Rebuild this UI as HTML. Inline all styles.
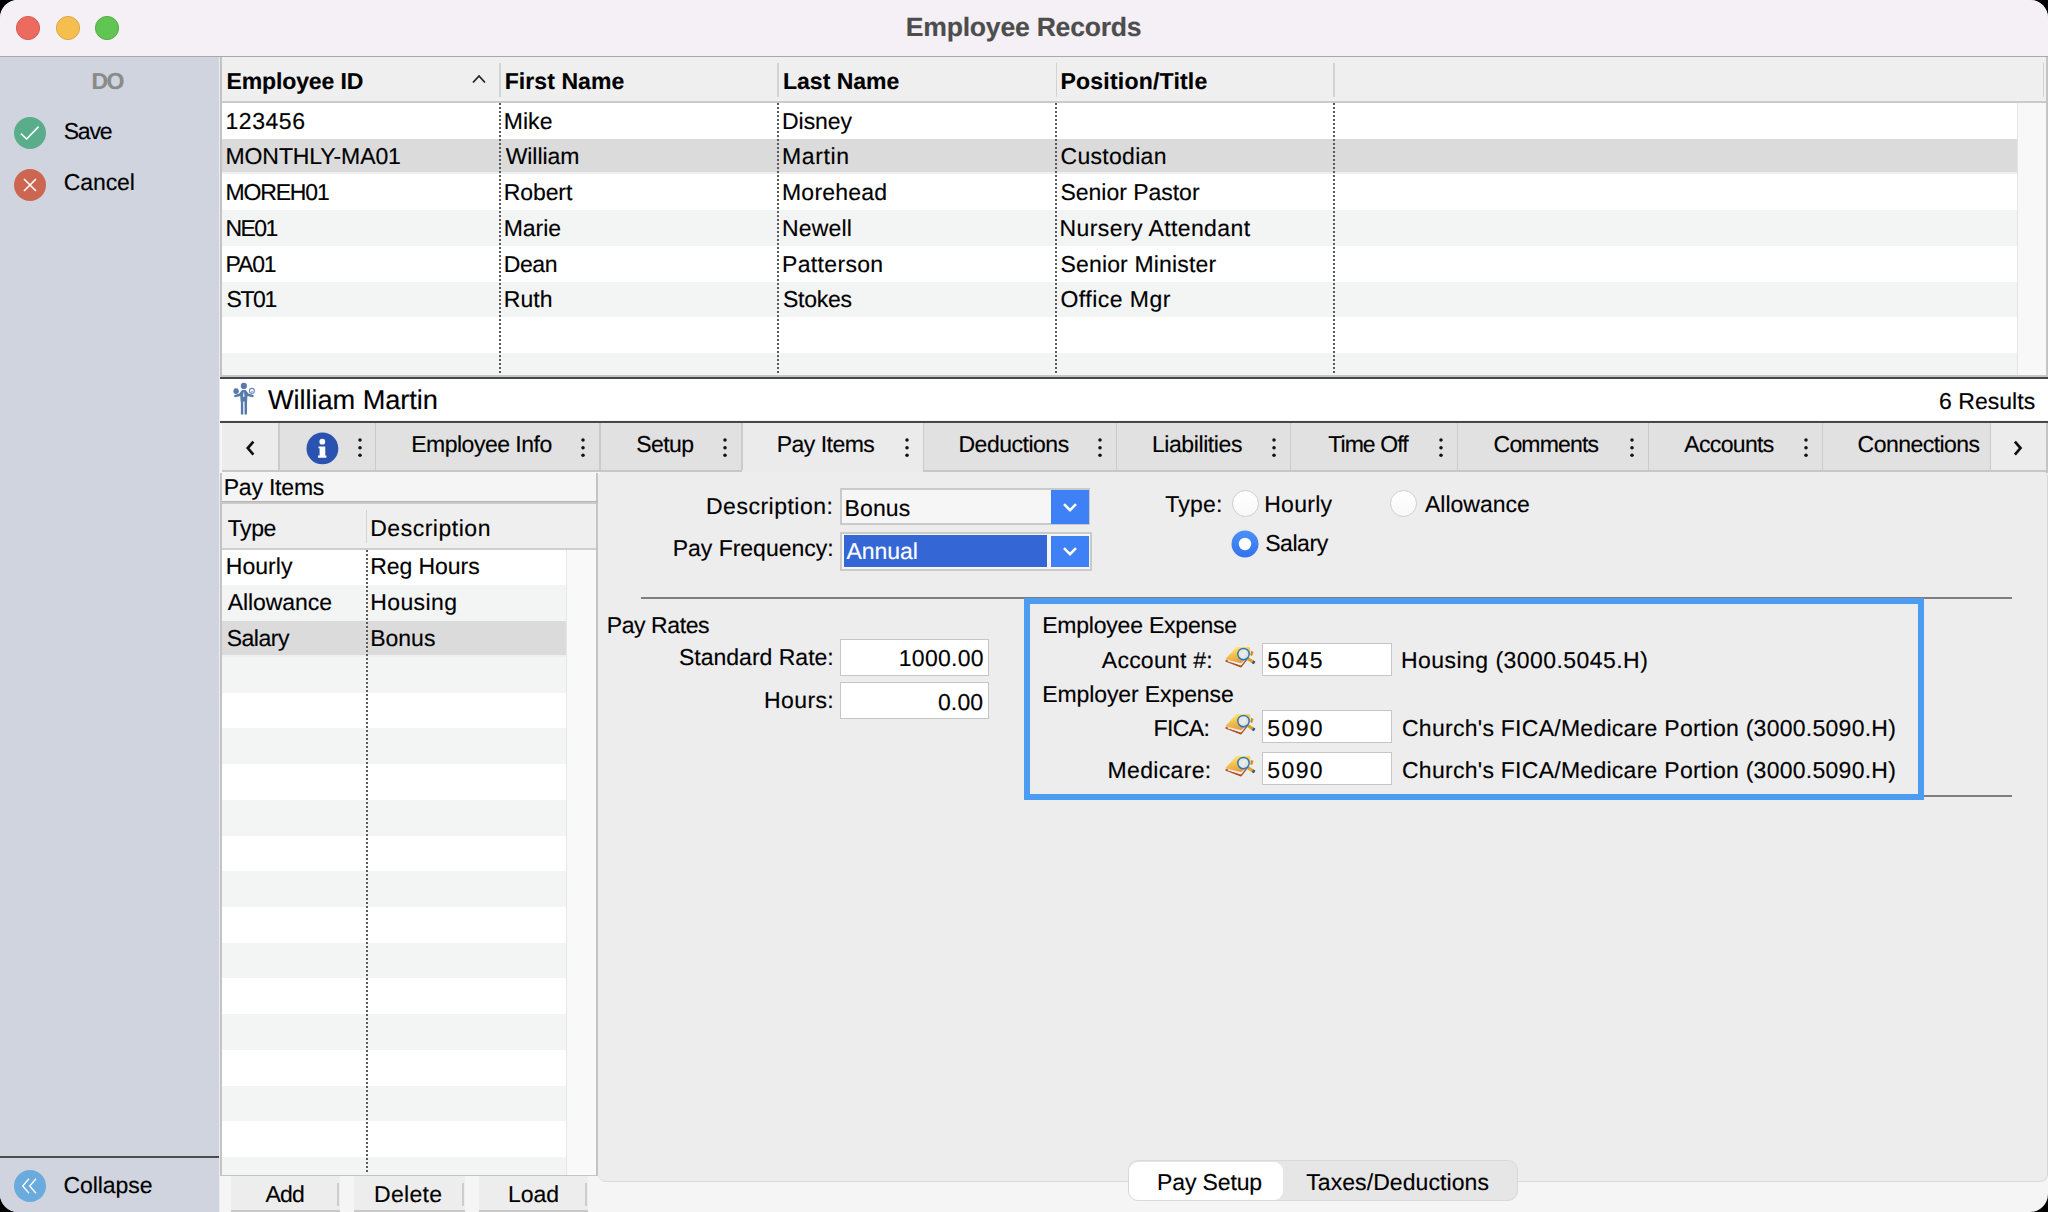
<!DOCTYPE html>
<html><head><meta charset="utf-8"><style>
html,body{margin:0;padding:0;background:#000;width:2048px;height:1212px;overflow:hidden}
#win{position:absolute;left:0;top:0;width:2048px;height:1212px;border-radius:18px;overflow:hidden;background:#f5f5f5}
.a{position:absolute}
.t{position:absolute;white-space:pre;font-family:"Liberation Sans", sans-serif;text-rendering:geometricPrecision;-webkit-text-stroke:0.15px currentColor;}
</style></head><body><div id="win">
<div class=a style='left:0px;top:0px;width:2048.00px;height:56.00px;background:#f4f0f6;'></div>
<div class=a style='left:0px;top:56px;width:2048.00px;height:1.00px;background:#a9a9ab;'></div>
<svg class=a style='left:15px;top:15px' width=26 height=26><circle cx=13 cy=13 r=11.6 fill='#ed6a5e' stroke='#d4574c' stroke-width=0.9 /></svg>
<svg class=a style='left:54.5px;top:15px' width=26 height=26><circle cx=13 cy=13 r=11.6 fill='#f5bf4f' stroke='#d8a13f' stroke-width=0.9 /></svg>
<svg class=a style='left:94px;top:15px' width=26 height=26><circle cx=13 cy=13 r=11.6 fill='#61c554' stroke='#4fa73f' stroke-width=0.9 /></svg>
<div class=a style='left:0px;top:57px;width:219.00px;height:1155.00px;background:#cfd4de;'></div>
<div class=a style='left:219px;top:57px;width:1.00px;height:1155.00px;background:#e9eaee;'></div>
<div class=a style='left:0px;top:1156px;width:219.00px;height:2.00px;background:#4b4b4b;'></div>
<svg class=a style='left:14px;top:117px' width=32 height=32><circle cx=16 cy=16 r=16 fill='#5aad8a' /><path d='M6.8 16.6 L12.6 22 L24.6 9.6' fill=none stroke='#fff' stroke-width=1.6 /></svg>
<svg class=a style='left:14px;top:168.5px' width=32 height=32><circle cx=16 cy=16 r=16 fill='#cc6651' /><path d='M10 10 L22 22 M22 10 L10 22' fill=none stroke='#fff' stroke-width=1.6 /></svg>
<svg class=a style='left:14px;top:1170px' width=32 height=32><circle cx=16 cy=16 r=16 fill='#6aabdd' /><path d='M15 8.8 L8.7 16 L15 23.2 M22 8.8 L15.7 16 L22 23.2' fill=none stroke='#fff' stroke-width=1.3 /></svg>
<div class=a style='left:220px;top:57px;width:1828.00px;height:320.00px;background:#ffffff;'></div>
<div class=a style='left:220px;top:57px;width:2.00px;height:320.00px;background:#c3c3c3;'></div>
<div class=a style='left:2046px;top:57px;width:2.00px;height:320.00px;background:#c4c4c4;'></div>
<div class=a style='left:222px;top:57px;width:1824.00px;height:44.00px;background:#efefef;'></div>
<div class=a style='left:222px;top:101px;width:1824.00px;height:1.50px;background:#cbcbcb;'></div>
<div class=a style='left:499px;top:63px;width:1.50px;height:34.00px;background:#d3d3d3;'></div>
<div class=a style='left:777px;top:63px;width:1.50px;height:34.00px;background:#d3d3d3;'></div>
<div class=a style='left:1055.5px;top:63px;width:1.50px;height:34.00px;background:#d3d3d3;'></div>
<div class=a style='left:1333px;top:63px;width:1.50px;height:34.00px;background:#d3d3d3;'></div>
<div class=a style='left:2042.5px;top:63px;width:1.50px;height:34.00px;background:#d3d3d3;'></div>
<svg class=a style='left:470px;top:72px' width=18 height=14><path d='M3 10.5 L9 4 L15 10.5' fill=none stroke='#222' stroke-width=1.8 /></svg>
<div class=a style='left:222px;top:102.87px;width:1794.50px;height:35.73px;background:#ffffff;'></div>
<div class=a style='left:222px;top:138.6px;width:1794.50px;height:33.73px;background:#dbdbdb;'></div>
<div class=a style='left:222px;top:172.32999999999998px;width:1794.50px;height:2.00px;background:#efefef;'></div>
<div class=a style='left:222px;top:174.32999999999998px;width:1794.50px;height:35.73px;background:#ffffff;'></div>
<div class=a style='left:222px;top:210.05999999999997px;width:1794.50px;height:35.73px;background:#f3f4f4;'></div>
<div class=a style='left:222px;top:245.78999999999996px;width:1794.50px;height:35.73px;background:#ffffff;'></div>
<div class=a style='left:222px;top:281.52px;width:1794.50px;height:35.73px;background:#f3f4f4;'></div>
<div class=a style='left:222px;top:317.25px;width:1794.50px;height:35.73px;background:#ffffff;'></div>
<div class=a style='left:222px;top:352.98px;width:1794.50px;height:23.52px;background:#f3f4f4;'></div>
<div class=a style='left:2016.5px;top:102.5px;width:29.50px;height:274.00px;background:#f8f8f8;'></div>
<div class=a style='left:2016.5px;top:102.5px;width:1.00px;height:274.00px;background:#e4e4e4;'></div>
<div class=a style='left:498.7px;top:103px;width:2.00px;height:273.50px;background:repeating-linear-gradient(to bottom,#5a5a5a 0,#5a5a5a 2px,transparent 2px,transparent 4px);'></div>
<div class=a style='left:776.6px;top:103px;width:2.00px;height:273.50px;background:repeating-linear-gradient(to bottom,#5a5a5a 0,#5a5a5a 2px,transparent 2px,transparent 4px);'></div>
<div class=a style='left:1055.2px;top:103px;width:2.00px;height:273.50px;background:repeating-linear-gradient(to bottom,#5a5a5a 0,#5a5a5a 2px,transparent 2px,transparent 4px);'></div>
<div class=a style='left:1332.5px;top:103px;width:2.00px;height:273.50px;background:repeating-linear-gradient(to bottom,#5a5a5a 0,#5a5a5a 2px,transparent 2px,transparent 4px);'></div>
<div class=a style='left:222px;top:375px;width:1824.00px;height:1.70px;background:#c6c6c6;'></div>
<div class=a style='left:220px;top:376.7px;width:1828.00px;height:2.10px;background:#474747;'></div>
<div class=a style='left:220px;top:378.8px;width:1828.00px;height:41.70px;background:#ffffff;'></div>
<div class=a style='left:220px;top:420.5px;width:1828.00px;height:2.20px;background:#474747;'></div>
<svg class=a style='left:228px;top:378px' width=34 height=40 viewBox='0 0 34 40'>
<g fill='#5879ab'>
<circle cx=15.85 cy=7.9 r=3.1 />
<path d='M14 12 L17.7 12 L20.2 15.2 L19.4 18.5 L19.1 23.5 L12.6 23.5 L12.3 18.5 L11.5 15.2 Z' />
<path d='M12.9 23 L15.2 23 L15.3 36.6 L12.9 36.6 Z' />
<path d='M16.5 23 L19 23 L19 36.6 L16.6 36.6 Z' />
<path d='M12.6 15.2 L12.9 18 L7 19.2 L6 18.2 L6.5 17.1 Z' />
<path d='M19.2 15.2 L18.9 18 L24.9 19.2 L25.9 18.2 L25.3 17.1 Z' />
<circle cx=8.1 cy=13.3 r=2.7 />
<path d='M6.4 9.6 L8.1 11 L9.8 9.6 L9.2 11.3 L7 11.3 Z' />
</g>
<circle cx=23.9 cy=12.9 r=2.5 fill=none stroke='#6a88b6' stroke-width=1.1 />
<path d='M22.9 13.3 L23.9 14 L25 13.3' fill=none stroke='#6a88b6' stroke-width=0.8 />
<path d='M15.8 13.2 L15 18.2 L15.8 19 L16.6 18.2 Z' fill='#fff' />
</svg>
<div class=a style='left:222px;top:422.6px;width:1824.00px;height:47.70px;background:#e1e1e1;'></div>
<div class=a style='left:222px;top:470.3px;width:1824.00px;height:1.70px;background:#c7c7c7;'></div>
<div class=a style='left:222px;top:422.6px;width:56.00px;height:47.70px;background:#ececec;'></div>
<div class=a style='left:1990px;top:422.6px;width:56.00px;height:47.70px;background:#ececec;'></div>
<div class=a style='left:741.5px;top:422.6px;width:181.00px;height:50.00px;background:#ebebeb;'></div>
<div class=a style='left:278px;top:422.6px;width:1.50px;height:47.70px;background:#cbcbcb;'></div>
<div class=a style='left:374.5px;top:422.6px;width:1.50px;height:47.70px;background:#cbcbcb;'></div>
<div class=a style='left:599px;top:422.6px;width:1.50px;height:47.70px;background:#cbcbcb;'></div>
<div class=a style='left:741px;top:422.6px;width:1.50px;height:47.70px;background:#cbcbcb;'></div>
<div class=a style='left:922.5px;top:422.6px;width:1.50px;height:47.70px;background:#cbcbcb;'></div>
<div class=a style='left:1115.5px;top:422.6px;width:1.50px;height:47.70px;background:#cbcbcb;'></div>
<div class=a style='left:1289.5px;top:422.6px;width:1.50px;height:47.70px;background:#cbcbcb;'></div>
<div class=a style='left:1456.5px;top:422.6px;width:1.50px;height:47.70px;background:#cbcbcb;'></div>
<div class=a style='left:1647.5px;top:422.6px;width:1.50px;height:47.70px;background:#cbcbcb;'></div>
<div class=a style='left:1821.5px;top:422.6px;width:1.50px;height:47.70px;background:#cbcbcb;'></div>
<div class=a style='left:1989.5px;top:422.6px;width:1.50px;height:47.70px;background:#cbcbcb;'></div>
<div class=a style='left:2046px;top:422.6px;width:2.00px;height:50.00px;background:#c4c4c4;'></div>
<svg class=a style='left:240px;top:435px' width=20 height=26><path d='M13.4 6.6 L7.8 13.1 L13.4 19.6' fill=none stroke='#111' stroke-width=2.7 /></svg>
<svg class=a style='left:2008px;top:435px' width=20 height=26><path d='M6.9 6.6 L12.5 13.1 L6.9 19.6' fill=none stroke='#111' stroke-width=2.7 /></svg>
<svg class=a style='left:305.5px;top:431.5px' width=33 height=33 viewBox='0 0 33 33'><circle cx=16.4 cy=16.4 r=15.9 fill='#2a52b0' />
<circle cx=16.3 cy=9.7 r=2.9 fill='#fff' />
<path d='M12.5 14.5 L19.25 14.5 L19.25 23.5 L20.4 23.5 L20.4 25.7 L12 25.7 L12 23.5 L13.6 23.5 L13.6 16.3 L12.5 16.3 Z' fill='#fff' /></svg>
<svg class=a style='left:357px;top:437px' width=6 height=22><circle cx=3 cy=3 r=1.75 fill='#111' /><circle cx=3 cy=10.7 r=1.75 fill='#111' /><circle cx=3 cy=18.3 r=1.75 fill='#111' /></svg>
<svg class=a style='left:580px;top:437px' width=6 height=22><circle cx=3 cy=3 r=1.75 fill='#111' /><circle cx=3 cy=10.7 r=1.75 fill='#111' /><circle cx=3 cy=18.3 r=1.75 fill='#111' /></svg>
<svg class=a style='left:722px;top:437px' width=6 height=22><circle cx=3 cy=3 r=1.75 fill='#111' /><circle cx=3 cy=10.7 r=1.75 fill='#111' /><circle cx=3 cy=18.3 r=1.75 fill='#111' /></svg>
<svg class=a style='left:903.5px;top:437px' width=6 height=22><circle cx=3 cy=3 r=1.75 fill='#111' /><circle cx=3 cy=10.7 r=1.75 fill='#111' /><circle cx=3 cy=18.3 r=1.75 fill='#111' /></svg>
<svg class=a style='left:1097px;top:437px' width=6 height=22><circle cx=3 cy=3 r=1.75 fill='#111' /><circle cx=3 cy=10.7 r=1.75 fill='#111' /><circle cx=3 cy=18.3 r=1.75 fill='#111' /></svg>
<svg class=a style='left:1271px;top:437px' width=6 height=22><circle cx=3 cy=3 r=1.75 fill='#111' /><circle cx=3 cy=10.7 r=1.75 fill='#111' /><circle cx=3 cy=18.3 r=1.75 fill='#111' /></svg>
<svg class=a style='left:1438px;top:437px' width=6 height=22><circle cx=3 cy=3 r=1.75 fill='#111' /><circle cx=3 cy=10.7 r=1.75 fill='#111' /><circle cx=3 cy=18.3 r=1.75 fill='#111' /></svg>
<svg class=a style='left:1628.5px;top:437px' width=6 height=22><circle cx=3 cy=3 r=1.75 fill='#111' /><circle cx=3 cy=10.7 r=1.75 fill='#111' /><circle cx=3 cy=18.3 r=1.75 fill='#111' /></svg>
<svg class=a style='left:1803px;top:437px' width=6 height=22><circle cx=3 cy=3 r=1.75 fill='#111' /><circle cx=3 cy=10.7 r=1.75 fill='#111' /><circle cx=3 cy=18.3 r=1.75 fill='#111' /></svg>
<div class=a style='left:220px;top:472.6px;width:377.50px;height:703.40px;background:#ffffff;'></div>
<div class=a style='left:220px;top:472.6px;width:2.00px;height:703.40px;background:#c4c4c4;'></div>
<div class=a style='left:595.5px;top:472.6px;width:2.00px;height:703.40px;background:#c4c4c4;'></div>
<div class=a style='left:222px;top:472.6px;width:373.50px;height:28.40px;background:#f5f5f5;'></div>
<div class=a style='left:222px;top:500.8px;width:375.50px;height:1.20px;background:#b4b4b4;'></div>
<div class=a style='left:222px;top:502px;width:373.50px;height:1.80px;background:#cacaca;'></div>
<div class=a style='left:222px;top:503.8px;width:373.50px;height:44.20px;background:#efefef;'></div>
<div class=a style='left:222px;top:548px;width:373.50px;height:1.70px;background:#cfcfcf;'></div>
<div class=a style='left:365.7px;top:510px;width:1.50px;height:33.00px;background:#d3d3d3;'></div>
<div class=a style='left:222px;top:549.7px;width:344.00px;height:35.73px;background:#ffffff;'></div>
<div class=a style='left:222px;top:585.4300000000001px;width:344.00px;height:35.73px;background:#f3f4f4;'></div>
<div class=a style='left:222px;top:621.1600000000001px;width:344.00px;height:33.73px;background:#dbdbdb;'></div>
<div class=a style='left:222px;top:654.8900000000001px;width:344.00px;height:2.00px;background:#efefef;'></div>
<div class=a style='left:222px;top:656.8900000000001px;width:344.00px;height:35.73px;background:#f3f4f4;'></div>
<div class=a style='left:222px;top:692.6200000000001px;width:344.00px;height:35.73px;background:#ffffff;'></div>
<div class=a style='left:222px;top:728.3500000000001px;width:344.00px;height:35.73px;background:#f3f4f4;'></div>
<div class=a style='left:222px;top:764.0800000000002px;width:344.00px;height:35.73px;background:#ffffff;'></div>
<div class=a style='left:222px;top:799.8100000000002px;width:344.00px;height:35.73px;background:#f3f4f4;'></div>
<div class=a style='left:222px;top:835.5400000000002px;width:344.00px;height:35.73px;background:#ffffff;'></div>
<div class=a style='left:222px;top:871.2700000000002px;width:344.00px;height:35.73px;background:#f3f4f4;'></div>
<div class=a style='left:222px;top:907.0000000000002px;width:344.00px;height:35.73px;background:#ffffff;'></div>
<div class=a style='left:222px;top:942.7300000000002px;width:344.00px;height:35.73px;background:#f3f4f4;'></div>
<div class=a style='left:222px;top:978.4600000000003px;width:344.00px;height:35.73px;background:#ffffff;'></div>
<div class=a style='left:222px;top:1014.1900000000003px;width:344.00px;height:35.73px;background:#f3f4f4;'></div>
<div class=a style='left:222px;top:1049.9200000000003px;width:344.00px;height:35.73px;background:#ffffff;'></div>
<div class=a style='left:222px;top:1085.6500000000003px;width:344.00px;height:35.73px;background:#f3f4f4;'></div>
<div class=a style='left:222px;top:1121.3800000000003px;width:344.00px;height:35.73px;background:#ffffff;'></div>
<div class=a style='left:222px;top:1157.1100000000004px;width:344.00px;height:17.59px;background:#f3f4f4;'></div>
<div class=a style='left:566px;top:549.7px;width:29.50px;height:625.00px;background:#f9f9f9;'></div>
<div class=a style='left:566px;top:549.7px;width:1.00px;height:625.00px;background:#e6e6e6;'></div>
<div class=a style='left:365.5px;top:550px;width:2.00px;height:623.00px;background:repeating-linear-gradient(to bottom,#5a5a5a 0,#5a5a5a 2px,transparent 2px,transparent 4px);'></div>
<div class=a style='left:220px;top:1174.7px;width:377.50px;height:1.60px;background:#c4c4c4;'></div>
<div class=a style='left:230.6px;top:1176.3px;width:109.40px;height:35.70px;background:#ededed;'></div>
<div class=a style='left:230.6px;top:1209.5px;width:109.40px;height:2.50px;background:#c9c9c9;'></div>
<div class=a style='left:337px;top:1182.5px;width:1.50px;height:23.50px;background:#cdcdcd;'></div>
<div class=a style='left:353.7px;top:1176.3px;width:111.30px;height:35.70px;background:#ededed;'></div>
<div class=a style='left:353.7px;top:1209.5px;width:111.30px;height:2.50px;background:#c9c9c9;'></div>
<div class=a style='left:462px;top:1182.5px;width:1.50px;height:23.50px;background:#cdcdcd;'></div>
<div class=a style='left:478.7px;top:1176.3px;width:109.30px;height:35.70px;background:#ededed;'></div>
<div class=a style='left:478.7px;top:1209.5px;width:109.30px;height:2.50px;background:#c9c9c9;'></div>
<div class=a style='left:585px;top:1182.5px;width:1.50px;height:23.50px;background:#cdcdcd;'></div>
<div class=a style='left:597.5px;top:472px;width:1449.5px;height:708.5px;background:#ededed;border-radius:5px 5px 8px 8px;border-right:1px solid #d6d6d6;border-bottom:1px solid #d9d9d9'></div>
<div class=a style='left:840.3px;top:488px;width:246.2px;height:33.3px;background:#f6f6f6;border:2px solid #cacaca'></div>
<div class=a style='left:1050.6px;top:490px;width:38.20px;height:33.50px;background:#3e80f5;'></div>
<div class=a style='left:840.3px;top:532.3px;width:247.4px;height:34.5px;background:#f6f6f6;border:2px solid #cacaca'></div>
<div class=a style='left:844px;top:535px;width:203.00px;height:32.00px;background:#3466d6;'></div>
<div class=a style='left:1050.6px;top:535.5px;width:38.20px;height:31.50px;background:#3e80f5;'></div>
<svg class=a style='left:1059px;top:499.5px' width=22 height=14><path d='M5 4.2 L11 10.2 L17 4.2' fill=none stroke='#fff' stroke-width=2.6 /></svg>
<svg class=a style='left:1059px;top:544px' width=22 height=14><path d='M5 4.2 L11 10.2 L17 4.2' fill=none stroke='#fff' stroke-width=2.6 /></svg>
<div class=a style='left:1231.5px;top:490px;width:25px;height:25px;border-radius:50%;background:linear-gradient(#fff,#f8f8f8);border:1px solid #cfcfcf'></div>
<div class=a style='left:1390.2px;top:490px;width:25px;height:25px;border-radius:50%;background:linear-gradient(#fff,#f8f8f8);border:1px solid #cfcfcf'></div>
<svg class=a style='left:1231px;top:529.6px' width=28 height=28><defs><linearGradient id=rg x1=0 y1=0 x2=0 y2=1><stop offset=0 stop-color='#4b91f7' /><stop offset=1 stop-color='#3373ee' /></linearGradient></defs><circle cx=14 cy=14 r=13.5 fill='url(#rg)' /><circle cx=14 cy=14 r=6.2 fill='#fff' /></svg>
<div class=a style='left:641px;top:596.5px;width:1370.60px;height:2.00px;background:#7f7f7f;'></div>
<div class=a style='left:1924px;top:794.5px;width:87.60px;height:2.00px;background:#7f7f7f;'></div>
<div class=a style='left:840.2px;top:639px;width:146.5px;height:34.8px;background:#fff;border:1px solid #c6c6c6'></div>
<div class=a style='left:840.2px;top:682.4px;width:146.5px;height:35.1px;background:#fff;border:1px solid #c6c6c6'></div>
<div class=a style='left:1261.6px;top:643px;width:128.2px;height:31.0px;background:#fff;border:1px solid #c6c6c6'></div>
<div class=a style='left:1261.6px;top:710.2px;width:128.2px;height:31.2px;background:#fff;border:1px solid #c6c6c6'></div>
<div class=a style='left:1261.6px;top:752.3px;width:128.2px;height:31.2px;background:#fff;border:1px solid #c6c6c6'></div>
<div class=a style='left:1024px;top:597.8px;width:888.4px;height:190.2px;border:6px solid #4c9cf2'></div>
<svg class=a style='left:1220px;top:642px' width=40 height=30 viewBox='0 0 40 30'>
<defs><linearGradient id='fg0' x1=0.2 y1=0 x2=0.6 y2=1><stop offset=0 stop-color='#fff37c' /><stop offset=0.45 stop-color='#f3c24e' /><stop offset=1 stop-color='#e39a40' /></linearGradient>
<radialGradient id='lg0' cx=0.4 cy=0.45 r=0.6><stop offset=0 stop-color='#f6e6d6' /><stop offset=0.7 stop-color='#d8e8f0' /><stop offset=1 stop-color='#b9d6ea' /></radialGradient></defs>
<path d='M5.6 18.6 L21 24.6 L26.5 17.4' fill=none stroke='#b0501c' stroke-width=1.7 stroke-linejoin=round />
<path d='M8 19 L21 22.6 L25.2 17.6' fill=none stroke='#eceeff' stroke-width=1.1 />
<path d='M16.3 5 L30 5 L30.4 8 L27 16.5 L21 21.3 L5.3 17.3 Z' fill='url(#fg0)' />
<path d='M31 8.8 L33.6 10 L32 14.2 L30.2 13 Z' fill='#cf9020' />
<path d='M28.2 16.8 L33.3 20.2' stroke='#dca22c' stroke-width=3.2 stroke-linecap=round />
<path d='M32.6 19.7 L34.6 21.1' stroke='#2b5d8c' stroke-width=3 />
<circle cx=23.5 cy=12.1 r=5.7 fill='url(#lg0)' stroke='#3876ae' stroke-width=1.5 />
<path d='M25.6 8.6 L21.6 15.6' stroke='#ffffff' stroke-opacity=0.6 stroke-width=0.9 />
</svg>
<svg class=a style='left:1220px;top:709.2px' width=40 height=30 viewBox='0 0 40 30'>
<defs><linearGradient id='fg1' x1=0.2 y1=0 x2=0.6 y2=1><stop offset=0 stop-color='#fff37c' /><stop offset=0.45 stop-color='#f3c24e' /><stop offset=1 stop-color='#e39a40' /></linearGradient>
<radialGradient id='lg1' cx=0.4 cy=0.45 r=0.6><stop offset=0 stop-color='#f6e6d6' /><stop offset=0.7 stop-color='#d8e8f0' /><stop offset=1 stop-color='#b9d6ea' /></radialGradient></defs>
<path d='M5.6 18.6 L21 24.6 L26.5 17.4' fill=none stroke='#b0501c' stroke-width=1.7 stroke-linejoin=round />
<path d='M8 19 L21 22.6 L25.2 17.6' fill=none stroke='#eceeff' stroke-width=1.1 />
<path d='M16.3 5 L30 5 L30.4 8 L27 16.5 L21 21.3 L5.3 17.3 Z' fill='url(#fg1)' />
<path d='M31 8.8 L33.6 10 L32 14.2 L30.2 13 Z' fill='#cf9020' />
<path d='M28.2 16.8 L33.3 20.2' stroke='#dca22c' stroke-width=3.2 stroke-linecap=round />
<path d='M32.6 19.7 L34.6 21.1' stroke='#2b5d8c' stroke-width=3 />
<circle cx=23.5 cy=12.1 r=5.7 fill='url(#lg1)' stroke='#3876ae' stroke-width=1.5 />
<path d='M25.6 8.6 L21.6 15.6' stroke='#ffffff' stroke-opacity=0.6 stroke-width=0.9 />
</svg>
<svg class=a style='left:1220px;top:751.3px' width=40 height=30 viewBox='0 0 40 30'>
<defs><linearGradient id='fg2' x1=0.2 y1=0 x2=0.6 y2=1><stop offset=0 stop-color='#fff37c' /><stop offset=0.45 stop-color='#f3c24e' /><stop offset=1 stop-color='#e39a40' /></linearGradient>
<radialGradient id='lg2' cx=0.4 cy=0.45 r=0.6><stop offset=0 stop-color='#f6e6d6' /><stop offset=0.7 stop-color='#d8e8f0' /><stop offset=1 stop-color='#b9d6ea' /></radialGradient></defs>
<path d='M5.6 18.6 L21 24.6 L26.5 17.4' fill=none stroke='#b0501c' stroke-width=1.7 stroke-linejoin=round />
<path d='M8 19 L21 22.6 L25.2 17.6' fill=none stroke='#eceeff' stroke-width=1.1 />
<path d='M16.3 5 L30 5 L30.4 8 L27 16.5 L21 21.3 L5.3 17.3 Z' fill='url(#fg2)' />
<path d='M31 8.8 L33.6 10 L32 14.2 L30.2 13 Z' fill='#cf9020' />
<path d='M28.2 16.8 L33.3 20.2' stroke='#dca22c' stroke-width=3.2 stroke-linecap=round />
<path d='M32.6 19.7 L34.6 21.1' stroke='#2b5d8c' stroke-width=3 />
<circle cx=23.5 cy=12.1 r=5.7 fill='url(#lg2)' stroke='#3876ae' stroke-width=1.5 />
<path d='M25.6 8.6 L21.6 15.6' stroke='#ffffff' stroke-opacity=0.6 stroke-width=0.9 />
</svg>
<div class=a style='left:1128px;top:1160.4px;width:388px;height:39px;border-radius:10px;background:#e6e6e6;border:1px solid #d9d9d9'></div>
<div class=a style='left:1129px;top:1161.5px;width:154px;height:38.2px;border-radius:9px;background:#fff'></div>
<span class=t style='left:905.80px;top:13.60px;font-size:26.6px;line-height:26.6px;font-weight:700;color:#4d4d4d;letter-spacing:-0.240px;'>Employee Records</span>
<span class=t style='left:91.40px;top:70.00px;font-size:23px;line-height:23px;font-weight:700;color:#8a8a8a;letter-spacing:-1.400px;'>DO</span>
<span class=t style='left:63.70px;top:120.10px;font-size:23px;line-height:23px;font-weight:400;color:#000;letter-spacing:-1.167px;'>Save</span>
<span class=t style='left:63.70px;top:171.20px;font-size:23px;line-height:23px;font-weight:400;color:#000;letter-spacing:-0.080px;'>Cancel</span>
<span class=t style='left:63.40px;top:1174.20px;font-size:23px;line-height:23px;font-weight:400;color:#000;letter-spacing:-0.057px;'>Collapse</span>
<span class=t style='left:226.50px;top:70.10px;font-size:23px;line-height:23px;font-weight:700;color:#000;letter-spacing:-0.130px;'>Employee ID</span>
<span class=t style='left:504.70px;top:70.10px;font-size:23px;line-height:23px;font-weight:700;color:#000;letter-spacing:0.078px;'>First Name</span>
<span class=t style='left:783.00px;top:70.10px;font-size:23px;line-height:23px;font-weight:700;color:#000;letter-spacing:0.000px;'>Last Name</span>
<span class=t style='left:1060.50px;top:70.10px;font-size:23px;line-height:23px;font-weight:700;color:#000;letter-spacing:0.215px;'>Position/Title</span>
<span class=t style='left:225.50px;top:109.60px;font-size:23px;line-height:23px;font-weight:400;color:#000;letter-spacing:0.540px;'>123456</span>
<span class=t style='left:503.70px;top:109.60px;font-size:23px;line-height:23px;font-weight:400;color:#000;letter-spacing:0.067px;'>Mike</span>
<span class=t style='left:782.00px;top:109.60px;font-size:23px;line-height:23px;font-weight:400;color:#000;letter-spacing:-0.040px;'>Disney</span>
<span class=t style='left:225.50px;top:145.33px;font-size:23px;line-height:23px;font-weight:400;color:#000;letter-spacing:-0.091px;'>MONTHLY-MA01</span>
<span class=t style='left:505.70px;top:145.33px;font-size:23px;line-height:23px;font-weight:400;color:#000;letter-spacing:-0.067px;'>William</span>
<span class=t style='left:782.00px;top:145.33px;font-size:23px;line-height:23px;font-weight:400;color:#000;letter-spacing:0.640px;'>Martin</span>
<span class=t style='left:1060.50px;top:145.33px;font-size:23px;line-height:23px;font-weight:400;color:#000;letter-spacing:0.300px;'>Custodian</span>
<span class=t style='left:225.50px;top:181.06px;font-size:23px;line-height:23px;font-weight:400;color:#000;letter-spacing:-1.167px;'>MOREH01</span>
<span class=t style='left:503.70px;top:181.06px;font-size:23px;line-height:23px;font-weight:400;color:#000;letter-spacing:-0.080px;'>Robert</span>
<span class=t style='left:782.00px;top:181.06px;font-size:23px;line-height:23px;font-weight:400;color:#000;letter-spacing:0.214px;'>Morehead</span>
<span class=t style='left:1060.50px;top:181.06px;font-size:23px;line-height:23px;font-weight:400;color:#000;letter-spacing:-0.025px;'>Senior Pastor</span>
<span class=t style='left:225.50px;top:216.79px;font-size:23px;line-height:23px;font-weight:400;color:#000;letter-spacing:-1.600px;'>NE01</span>
<span class=t style='left:503.70px;top:216.79px;font-size:23px;line-height:23px;font-weight:400;color:#000;letter-spacing:-0.050px;'>Marie</span>
<span class=t style='left:782.00px;top:216.79px;font-size:23px;line-height:23px;font-weight:400;color:#000;letter-spacing:0.160px;'>Newell</span>
<span class=t style='left:1059.50px;top:216.79px;font-size:23px;line-height:23px;font-weight:400;color:#000;letter-spacing:0.406px;'>Nursery Attendant</span>
<span class=t style='left:225.50px;top:252.52px;font-size:23px;line-height:23px;font-weight:400;color:#000;letter-spacing:-1.167px;'>PA01</span>
<span class=t style='left:503.70px;top:252.52px;font-size:23px;line-height:23px;font-weight:400;color:#000;letter-spacing:-0.400px;'>Dean</span>
<span class=t style='left:782.00px;top:252.52px;font-size:23px;line-height:23px;font-weight:400;color:#000;letter-spacing:0.338px;'>Patterson</span>
<span class=t style='left:1060.50px;top:252.52px;font-size:23px;line-height:23px;font-weight:400;color:#000;letter-spacing:0.157px;'>Senior Minister</span>
<span class=t style='left:226.50px;top:288.25px;font-size:23px;line-height:23px;font-weight:400;color:#000;letter-spacing:-1.400px;'>ST01</span>
<span class=t style='left:503.70px;top:288.25px;font-size:23px;line-height:23px;font-weight:400;color:#000;letter-spacing:0.100px;'>Ruth</span>
<span class=t style='left:783.00px;top:288.25px;font-size:23px;line-height:23px;font-weight:400;color:#000;letter-spacing:-0.240px;'>Stokes</span>
<span class=t style='left:1060.50px;top:288.25px;font-size:23px;line-height:23px;font-weight:400;color:#000;letter-spacing:0.467px;'>Office Mgr</span>
<span class=t style='left:268.00px;top:385.70px;font-size:27.2px;line-height:27.2px;font-weight:400;color:#000;letter-spacing:-0.062px;'>William Martin</span>
<span class=t style='left:1939.00px;top:389.60px;font-size:23px;line-height:23px;font-weight:400;color:#000;letter-spacing:0.037px;'>6 Results</span>
<span class=t style='left:411.20px;top:433.00px;font-size:23px;line-height:23px;font-weight:400;color:#000;letter-spacing:-0.500px;'>Employee Info</span>
<span class=t style='left:636.30px;top:433.00px;font-size:23px;line-height:23px;font-weight:400;color:#000;letter-spacing:-0.575px;'>Setup</span>
<span class=t style='left:776.70px;top:433.00px;font-size:23px;line-height:23px;font-weight:400;color:#000;letter-spacing:-0.513px;'>Pay Items</span>
<span class=t style='left:958.50px;top:433.00px;font-size:23px;line-height:23px;font-weight:400;color:#000;letter-spacing:-0.489px;'>Deductions</span>
<span class=t style='left:1151.90px;top:433.00px;font-size:23px;line-height:23px;font-weight:400;color:#000;letter-spacing:-0.410px;'>Liabilities</span>
<span class=t style='left:1328.20px;top:433.00px;font-size:23px;line-height:23px;font-weight:400;color:#000;letter-spacing:-0.929px;'>Time Off</span>
<span class=t style='left:1493.60px;top:433.00px;font-size:23px;line-height:23px;font-weight:400;color:#000;letter-spacing:-0.814px;'>Comments</span>
<span class=t style='left:1684.30px;top:433.00px;font-size:23px;line-height:23px;font-weight:400;color:#000;letter-spacing:-0.657px;'>Accounts</span>
<span class=t style='left:1857.60px;top:433.00px;font-size:23px;line-height:23px;font-weight:400;color:#000;letter-spacing:-0.540px;'>Connections</span>
<span class=t style='left:223.70px;top:476.30px;font-size:23px;line-height:23px;font-weight:400;color:#000;letter-spacing:-0.200px;'>Pay Items</span>
<span class=t style='left:227.70px;top:516.60px;font-size:23px;line-height:23px;font-weight:400;color:#000;letter-spacing:-0.400px;'>Type</span>
<span class=t style='left:370.20px;top:516.60px;font-size:23px;line-height:23px;font-weight:400;color:#000;letter-spacing:0.520px;'>Description</span>
<span class=t style='left:225.70px;top:555.00px;font-size:23px;line-height:23px;font-weight:400;color:#000;letter-spacing:0.080px;'>Hourly</span>
<span class=t style='left:370.20px;top:555.00px;font-size:23px;line-height:23px;font-weight:400;color:#000;letter-spacing:-0.062px;'>Reg Hours</span>
<span class=t style='left:227.70px;top:591.00px;font-size:23px;line-height:23px;font-weight:400;color:#000;letter-spacing:-0.062px;'>Allowance</span>
<span class=t style='left:370.20px;top:591.00px;font-size:23px;line-height:23px;font-weight:400;color:#000;letter-spacing:0.400px;'>Housing</span>
<span class=t style='left:226.70px;top:627.00px;font-size:23px;line-height:23px;font-weight:400;color:#000;letter-spacing:-0.500px;'>Salary</span>
<span class=t style='left:370.20px;top:627.00px;font-size:23px;line-height:23px;font-weight:400;color:#000;letter-spacing:0.000px;'>Bonus</span>
<span class=t style='left:265.40px;top:1182.60px;font-size:23px;line-height:23px;font-weight:400;color:#000;letter-spacing:-0.750px;'>Add</span>
<span class=t style='left:374.10px;top:1182.60px;font-size:23px;line-height:23px;font-weight:400;color:#000;letter-spacing:0.300px;'>Delete</span>
<span class=t style='left:507.90px;top:1182.60px;font-size:23px;line-height:23px;font-weight:400;color:#000;letter-spacing:-0.033px;'>Load</span>
<span class=t style='left:706.00px;top:495.30px;font-size:23px;line-height:23px;font-weight:400;color:#000;letter-spacing:0.500px;'>Description:</span>
<span class=t style='left:672.70px;top:537.00px;font-size:23px;line-height:23px;font-weight:400;color:#000;letter-spacing:-0.015px;'>Pay Frequency:</span>
<span class=t style='left:844.50px;top:497.00px;font-size:23px;line-height:23px;font-weight:400;color:#000;letter-spacing:0.125px;'>Bonus</span>
<span class=t style='left:846.50px;top:540.00px;font-size:23px;line-height:23px;font-weight:400;color:#fff;letter-spacing:-0.060px;'>Annual</span>
<span class=t style='left:1165.20px;top:492.60px;font-size:23px;line-height:23px;font-weight:400;color:#000;letter-spacing:0.250px;'>Type:</span>
<span class=t style='left:1264.20px;top:492.60px;font-size:23px;line-height:23px;font-weight:400;color:#000;letter-spacing:0.280px;'>Hourly</span>
<span class=t style='left:1425.00px;top:492.60px;font-size:23px;line-height:23px;font-weight:400;color:#000;letter-spacing:0.000px;'>Allowance</span>
<span class=t style='left:1265.20px;top:531.70px;font-size:23px;line-height:23px;font-weight:400;color:#000;letter-spacing:-0.440px;'>Salary</span>
<span class=t style='left:606.80px;top:613.80px;font-size:23px;line-height:23px;font-weight:400;color:#000;letter-spacing:-0.425px;'>Pay Rates</span>
<span class=t style='left:679.00px;top:645.50px;font-size:23px;line-height:23px;font-weight:400;color:#000;letter-spacing:0.000px;'>Standard Rate:</span>
<span class=t style='left:898.80px;top:647.40px;font-size:23px;line-height:23px;font-weight:400;color:#000;letter-spacing:0.267px;'>1000.00</span>
<span class=t style='left:764.00px;top:688.80px;font-size:23px;line-height:23px;font-weight:400;color:#000;letter-spacing:0.400px;'>Hours:</span>
<span class=t style='left:937.90px;top:690.80px;font-size:23px;line-height:23px;font-weight:400;color:#000;letter-spacing:0.167px;'>0.00</span>
<span class=t style='left:1042.20px;top:613.60px;font-size:23px;line-height:23px;font-weight:400;color:#000;letter-spacing:-0.213px;'>Employee Expense</span>
<span class=t style='left:1101.80px;top:649.00px;font-size:23px;line-height:23px;font-weight:400;color:#000;letter-spacing:0.244px;'>Account #:</span>
<span class=t style='left:1267.20px;top:649.00px;font-size:23px;line-height:23px;font-weight:400;color:#000;letter-spacing:1.433px;'>5045</span>
<span class=t style='left:1401.00px;top:649.20px;font-size:23px;line-height:23px;font-weight:400;color:#000;letter-spacing:0.450px;'>Housing (3000.5045.H)</span>
<span class=t style='left:1042.20px;top:682.70px;font-size:23px;line-height:23px;font-weight:400;color:#000;letter-spacing:-0.100px;'>Employer Expense</span>
<span class=t style='left:1153.50px;top:716.50px;font-size:23px;line-height:23px;font-weight:400;color:#000;letter-spacing:-0.625px;'>FICA:</span>
<span class=t style='left:1267.20px;top:716.50px;font-size:23px;line-height:23px;font-weight:400;color:#000;letter-spacing:1.433px;'>5090</span>
<span class=t style='left:1402.00px;top:716.50px;font-size:23px;line-height:23px;font-weight:400;color:#000;letter-spacing:0.265px;'>Church&#x27;s FICA/Medicare Portion (3000.5090.H)</span>
<span class=t style='left:1107.60px;top:758.70px;font-size:23px;line-height:23px;font-weight:400;color:#000;letter-spacing:0.325px;'>Medicare:</span>
<span class=t style='left:1267.20px;top:758.70px;font-size:23px;line-height:23px;font-weight:400;color:#000;letter-spacing:1.433px;'>5090</span>
<span class=t style='left:1402.00px;top:758.70px;font-size:23px;line-height:23px;font-weight:400;color:#000;letter-spacing:0.265px;'>Church&#x27;s FICA/Medicare Portion (3000.5090.H)</span>
<span class=t style='left:1157.00px;top:1170.80px;font-size:23px;line-height:23px;font-weight:400;color:#000;letter-spacing:-0.125px;'>Pay Setup</span>
<span class=t style='left:1306.20px;top:1170.80px;font-size:23px;line-height:23px;font-weight:400;color:#000;letter-spacing:0.080px;'>Taxes/Deductions</span>
</div></body></html>
